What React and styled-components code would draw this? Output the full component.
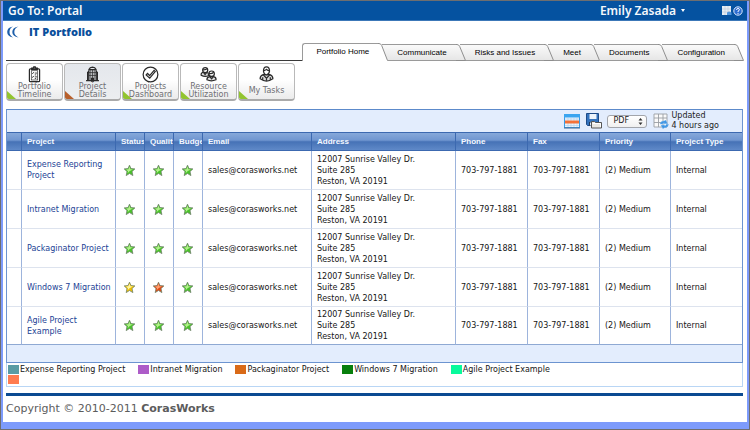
import React from 'react';
import styled, { createGlobalStyle } from 'styled-components';

const verdana = '"DejaVu Sans", Verdana, sans-serif';
const arial = '"Liberation Sans", Arial, sans-serif';

const GlobalStyle = createGlobalStyle`
  * { box-sizing: border-box; }
  body { margin: 0; background: #7d9bfb; font-family: ${verdana}; }
  button, select { font: inherit; margin: 0; }
`;

const Window = styled.div`
  min-height: 100vh;
  display: flex;
  flex-direction: column;
  padding: 0 2px 7px;
  border: 1px solid #6e6e70;
  background: #7d9bfb;
`;
const Page = styled.div`
  flex: 1;
  display: flex;
  flex-direction: column;
  background: #fff;
`;
const TopBar = styled.header`
  display: flex;
  align-items: center;
  height: 20px;
  padding: 0 4px 0 5px;
  background: #0552a0;
  border-bottom: 1px solid #3c78b8;
  color: #f4f8fc;
  font: 600 12px/16px "Noto Sans", sans-serif;
`;
const TopLabel = styled.span`
  flex: 1;
`;
const UserButton = styled.button`
  display: flex;
  align-items: center;
  gap: 5px;
  margin-right: 36px;
  padding: 0;
  border: 0;
  background: none;
  color: inherit;
`;
const IconLink = styled.button`
  display: flex;
  padding: 0;
  border: 0;
  background: none;
  margin-left: 1px;
`;
const TitleRow = styled.div`
  display: flex;
  align-items: center;
  gap: 10px;
  height: 22px;
  padding-left: 4px;
`;
const Title = styled.h1`
  margin: 0;
  color: #0a4f9c;
  font: 800 11px/16px "Open Sans", sans-serif;
`;
const TabBar = styled.nav`
  display: flex;
  align-items: flex-end;
  height: 18px;
  padding: 0 3px;
`;
const TabLine = styled.div`
  flex: 1;
  border-bottom: 1px solid #3a3a3a;
`;
const Tab = styled.button`
  position: relative;
  z-index: ${(p) => p.$z};
  display: flex;
  align-items: center;
  height: ${(p) => (p.$active ? 18 : 17)}px;
  margin: 0 0 0 ${(p) => (p.$active ? 0 : -6)}px;
  padding: 0;
  border: 0;
  background: none;
  color: #000;
  font: 8px/12px ${arial};
  white-space: nowrap;
`;
const TabBody = styled.span`
  align-self: stretch;
  padding: 2px 9px 0 ${(p) => (p.$active ? 13 : 15)}px;
  border: solid #9a9a9a;
  border-width: 1px 0 ${(p) => (p.$active ? 0 : 1)}px ${(p) => (p.$active ? 1 : 0)}px;
  border-radius: ${(p) => (p.$active ? '3px 0 0 0' : '0')};
  background: ${(p) => (p.$active ? '#fff' : 'linear-gradient(#fafafa, #e6e6e6)')};
`;
const Actions = styled.div`
  display: flex;
  gap: 1px;
  padding: 2px 3px 0;
`;
const ActionButton = styled.button`
  position: relative;
  display: flex;
  flex-direction: column;
  align-items: center;
  width: 57px;
  height: 38px;
  padding: 2px 0 0;
  overflow: hidden;
  border: 1px solid #b9b9b9;
  border-bottom: 2px solid #aaa;
  border-radius: 4px;
  background: ${(p) => (p.$current ? 'linear-gradient(#e4e7ec, #eceef0)' : 'linear-gradient(#fff 45%, #ebebeb)')};
  color: #6f6f74;
  font-size: 8px;
  line-height: 8px;

  &::after {
    content: '';
    position: absolute;
    left: 0;
    bottom: 0;
    width: 9px;
    height: 8px;
    background: ${(p) => (p.$current ? '#b8602c' : '#92c42e')};
    clip-path: polygon(0 0, 100% 100%, 0 100%);
  }
`;
const ActionText = styled.span`
  flex: 1;
  display: flex;
  flex-direction: column;
  justify-content: center;
  position: relative;
  z-index: 1;
`;
const Grid = styled.section`
  margin: 8px 4px 0 3px;
  border: 1px solid #6c94d0;
  border-top-color: #5c8acb;
`;
const GridToolbar = styled.div`
  display: flex;
  align-items: center;
  justify-content: flex-end;
  height: 22px;
  padding-right: 23px;
  background: #e3edfd;
`;
const ToolButton = styled.button`
  display: flex;
  padding: 0;
  border: 0;
  background: none;
  margin-right: ${(p) => p.$gap}px;
`;
const SelectBox = styled.label`
  position: relative;
  display: flex;
  margin-right: 6px;

  svg {
    position: absolute;
    right: 4px;
    top: 3px;
    pointer-events: none;
  }
`;
const Select = styled.select`
  appearance: none;
  width: 40px;
  height: 13px;
  padding: 0 5px;
  border: 1px solid #a2a5ab;
  border-radius: 3px;
  background: linear-gradient(#fff, #f0f0f0);
  color: #222;
  font: 8px/10px ${verdana};
`;
const Updated = styled.div`
  color: #222;
  font-size: 8px;
  line-height: 10px;
`;
const Table = styled.table`
  width: 100%;
  table-layout: fixed;
  border-collapse: separate;
  border-spacing: 0;
  font-size: 8px;
  line-height: 11px;
`;
const Col = styled.col`
  width: ${(p) => (p.$w ? `${p.$w}px` : 'auto')};
`;
const Th = styled.th`
  height: 19px;
  padding: 0 0 0 5px;
  overflow: hidden;
  border: solid #3c69b0;
  border-width: 1px 0 1px ${(p) => (p.$first ? 0 : 1)}px;
  background: linear-gradient(#86a8da 0%, #7096d0 42%, #4672b6 52%, #5f89c8 100%);
  color: #f4f8ff;
  font: bold 8px/12px ${arial};
  text-align: left;
  white-space: nowrap;
`;
const Td = styled.td`
  height: 39px;
  padding: ${(p) => (p.$star ? '0' : '0 3px 0 5px')};
  border-left: ${(p) => (p.$first ? '0' : '1px solid #9db4dc')};
  border-bottom: 1px solid #dde3ee;
  background: #fff;
  color: #161616;
  text-align: ${(p) => (p.$star ? 'center' : 'left')};

  tr:last-child & {
    height: 38px;
    border-bottom-color: #8fa9d3;
  }
  svg { display: block; margin: 0 auto 0 7px; }
`;
const ProjectLink = styled.a`
  color: #1c3f95;
  text-decoration: none;
`;
const GridFooter = styled.div`
  height: 17px;
  background: #e3edfd;
`;
const Legend = styled.ul`
  display: flex;
  flex-wrap: wrap;
  align-content: flex-start;
  gap: 1px 13px;
  margin: 0 4px 0 3px;
  padding: 2px 24% 2px 1px;
  list-style: none;
  border: 1px solid #b9d6f5;
  border-top: 0;
  font-size: 8px;
  line-height: 9px;
  color: #161616;
`;
const LegendItem = styled.li`
  display: flex;
  align-items: center;
  gap: 1px;
`;
const Swatch = styled.span`
  width: 11px;
  height: 9px;
  background: ${(p) => p.$color};
`;
const Footer = styled.footer`
  margin: 6px 4px 0 3px;
  padding-top: 5px;
  border-top: 3px solid #0b4a92;
  color: #5c5c5c;
  font-size: 11px;
  line-height: 16px;
`;

const STAR = { green: ['#b4f08c', '#48c428'], yellow: ['#fff6a0', '#f0c000'], red: ['#ffa070', '#e04810'] };

function Star({ color }) {
  const [light, dark] = STAR[color];
  return (
    <svg width="13" height="13" viewBox="0 0 13 13" role="img" aria-label={color}>
      <path d="M6.5 1.2 8 4.6l3.9.3-2.9 2.7.9 4-3.4-2.1-3.3 2.1.8-4L1.2 4.9 5 4.6z" fill={dark} stroke="#6f806a" strokeWidth=".8" strokeLinejoin="round" />
      <path d="M6.4 2.6 7.4 5.3l2.6.2-3.2 1.6-2.2 2.2.4-2.1L3 5.5l2.4-.2z" fill={light} />
    </svg>
  );
}

function TabCap({ active }) {
  const h = active ? 18 : 17;
  const b = active ? h : h - 1;
  return (
    <svg width="10" height={h} viewBox={`0 0 10 ${h}`}>
      <defs>
        <linearGradient id="tabFill" x2="0" y2="1">
          <stop offset="0" stopColor="#fafafa" />
          <stop offset="1" stopColor="#e6e6e6" />
        </linearGradient>
      </defs>
      <path d={`M0 .5H1Q3 .6 3.7 2.5L9.5 ${h - 0.5}V${b}H0z`} fill={active ? '#fff' : 'url(#tabFill)'} />
      <path d={`M0 .5H1Q3 .6 3.7 2.5L9.5 ${h - 0.5}${active ? '' : 'H0'}`} fill="none" stroke="#8e8e8e" />
    </svg>
  );
}

const line = { width: 17, height: 17, viewBox: '0 0 18 18', fill: 'none', stroke: '#2a2a2a', strokeWidth: 1.3 };
const ActionIcons = {
  clipboard: (
    <svg {...line}>
      <rect x="3.6" y="3" width="10.8" height="13.6" rx="1" />
      <rect x="5.6" y="5" width="6.8" height="9.8" strokeWidth=".7" />
      <path d="M6 3.6V2.2h1.6L8.2.9h1.6l.6 1.3H12v1.4z" fill="#666" />
      <path d="m6.3 7.3.8.8 1.2-1.6M6.3 11.3l.8.8 1.2-1.6M9.3 7.5H12M9.3 9.4h1.5M9.3 11.5H12M9.3 13.2h1.5" strokeWidth=".9" />
    </svg>
  ),
  building: (
    <svg {...line}>
      <path d="M5.2 15V3.6Q6.2 1.2 9 1.1q2.8.1 3.8 2.5V15M5.2 5.5 3.8 7v8M12.8 5.5 14.2 7v8M2.2 15.5h13.6M5.2 3.9h7.6" />
      <path d="M7.2 4v11M9 4v11M10.8 4v11M5.2 7h7.6M5.2 10h7.6" strokeWidth=".8" />
      <path d="M8 13h2v3H8z" fill="#333" />
    </svg>
  ),
  check: (
    <svg {...line}>
      <circle cx="9" cy="9" r="7.8" />
      <path d="m4.4 9.4 1.4-1.5 2.3 2.2 4.7-5.4 1.2 1.2-5.8 7z" fill="#fff" />
    </svg>
  ),
  people: (
    <svg {...line}>
      <path d="M1.2 9.7Q.8 7 4 6.6h3Q9 7 9 9v1.3Q5 12 1.2 9.7z" fill="#ddd" />
      <circle cx="5.5" cy="4.3" r="2.7" fill="#fff" />
      <path d="M3 4q3 .4 4.7-1.2M3.8 7l1.6 2L7 7" />
      <path d="M7.4 14.6q-.4-2.8 3-3.4h4q2.9.5 2.5 3.4-5 2.3-9.5 0z" fill="#ddd" />
      <circle cx="12.3" cy="8.2" r="2.9" fill="#fff" />
      <path d="M9.5 8q3.2.4 5-1.4M10.6 11.5l1.7 2 1.7-2" />
    </svg>
  ),
  person: (
    <svg {...line}>
      <path d="M2.3 13.6q-.3-3.3 3.2-4.5h7q3.5 1.2 3.2 4.5Q9 18.5 2.3 13.6z" fill="#ddd" />
      <path d="M5.8 5.4Q5.8 1 9 1t3.2 4.4Q11.6 9.2 9 9.4 6.3 9.2 5.8 5.4z" fill="#fff" />
      <path d="M6 5q1.4.1 3-1.4Q10.4 5 12 5M5.4 9.2 9 13l3.6-3.8M9 12v3.6M5 12v2.8M13 12v2.8" />
    </svg>
  ),
};

const tabs = ['Portfolio Home', 'Communicate', 'Risks and Issues', 'Meet', 'Documents', 'Configuration'];
const actions = [
  ['clipboard', ['Portfolio', 'Timeline']],
  ['building', ['Project', 'Details']],
  ['check', ['Projects', 'Dashboard']],
  ['people', ['Resource', 'Utilization']],
  ['person', ['My Tasks']],
];
const columns = [
  ['', 14], ['Project', 94], ['Status', 29], ['Quality', 29], ['Budget', 29], ['Email', 109],
  ['Address', 0], ['Phone', 72], ['Fax', 72], ['Priority', 71], ['Project Type', 72],
];
const projects = [
  ['Expense Reporting Project', 'green', 'green', 'green'],
  ['Intranet Migration', 'green', 'green', 'green'],
  ['Packaginator Project', 'green', 'green', 'green'],
  ['Windows 7 Migration', 'yellow', 'red', 'green'],
  ['Agile Project Example', 'green', 'green', 'green'],
];
const legend = [
  ['Expense Reporting Project', '#5a9ca4'],
  ['Intranet Migration', '#ad5cc8'],
  ['Packaginator Project', '#d96a18'],
  ['Windows 7 Migration', '#087f0c'],
  ['Agile Project Example', '#08fa9c'],
  ['', '#ff7c50'],
];

export default function App() {
  return (
    <>
      <GlobalStyle />
      <Window>
        <Page>
          <TopBar>
            <TopLabel>Go To: Portal</TopLabel>
            <UserButton>
              Emily Zasada
              <svg width="4" height="3" viewBox="0 0 4 3"><path d="M0 0h4L2 3z" fill="#fff" /></svg>
            </UserButton>
            <IconLink aria-label="Customize">
              <svg width="10" height="10" viewBox="0 0 10 10">
                <path d="M0 0h9v9H0z" fill="#e8eef4" />
                <path d="M3 0v9M6 0v9M0 3h9M0 6h9" stroke="#b8c8d6" strokeWidth=".6" />
                <path d="M5 9V6.5l2-1 2.5 1V9z" fill="#4f94dc" />
              </svg>
            </IconLink>
            <IconLink aria-label="Help">
              <svg width="10" height="10" viewBox="0 0 10 10">
                <circle cx="5" cy="5" r="4.2" fill="#2c6cd0" stroke="#dce9fa" />
                <path d="M3.5 3.9Q3.6 2.5 5 2.5t1.5 1.2Q6.5 4.5 5 5.2V6M5 6.9v1" fill="none" stroke="#fff" strokeWidth="1" />
              </svg>
            </IconLink>
          </TopBar>
          <TitleRow>
            <svg width="12" height="12" viewBox="0 0 12 12">
              <path d="M6 .6Q.2 1.6.2 6T6 11.4Q2.5 9.5 2.5 6T6 .6z" fill="#1c5eaa" />
              <path d="M11.5.6Q5.3 1.6 5.3 6t6.2 5.4Q7.3 9.5 7.3 6t4.2-5.4z" fill="#1c5eaa" />
            </svg>
            <Title>IT Portfolio</Title>
          </TitleRow>
          <TabBar>
            <TabLine />
            {tabs.map((name, i) => (
              <Tab key={name} $active={i === 0} $z={10 - i}>
                <TabBody $active={i === 0}>{name}</TabBody>
                <TabCap active={i === 0} />
              </Tab>
            ))}
          </TabBar>
          <Actions>
            {actions.map(([icon, words], i) => (
              <ActionButton key={icon} $current={i === 1}>
                {ActionIcons[icon]}
                <ActionText>
                  {words.map((w) => <span key={w}>{w}</span>)}
                </ActionText>
              </ActionButton>
            ))}
          </Actions>
          <Grid>
            <GridToolbar>
              <ToolButton $gap={6} aria-label="Calendar view">
                <svg width="16" height="16" viewBox="0 0 16 16">
                  <rect x=".5" y="1.5" width="15" height="13" fill="#eaf5ff" stroke="#3a9be6" />
                  <path d="M0 1h16v3.5H0z" fill="#3aa5f0" />
                  <path d="M1 6h14M1 12.5h14M4 5v9M7 5v9M10 5v9M13 5v9" stroke="#b8d2e8" strokeWidth=".7" />
                  <path d="M1 7.5h14v3H1z" fill="#f47238" />
                  <path d="M0 15h16" stroke="#46688f" />
                </svg>
              </ToolButton>
              <ToolButton $gap={5} aria-label="Save export">
                <svg width="16" height="16" viewBox="0 0 16 16">
                  <path d="M.5.5h12v12h-11l-1-1z" fill="#3473bd" stroke="#1d4b88" />
                  <path d="M3.5 1h7v5h-7z" fill="#edf4fb" />
                  <path d="M3 9h6v3.5H3z" fill="#233b5c" />
                  <path d="M4 9.5h1.5v3H4z" fill="#dce8f4" />
                  <path d="M5.5 8.5h3l1 1h6V15h-10z" fill="#e9e7e2" stroke="#555" />
                  <path d="M6.5 10.5h8V14" fill="none" stroke="#fff" />
                </svg>
              </ToolButton>
              <SelectBox>
                <Select aria-label="Export format" defaultValue="PDF">
                  <option>PDF</option>
                  <option>Excel</option>
                </Select>
                <svg width="5" height="7" viewBox="0 0 5 7"><path d="M2.5 0 4.5 2.5h-4zM2.5 7l2-2.5h-4z" fill="#333" /></svg>
              </SelectBox>
              <ToolButton $gap={2} aria-label="Refresh">
                <svg width="16" height="16" viewBox="0 0 16 16">
                  <path d="M1 1h13v13H1z" fill="#fafafa" />
                  <path d="M1 1h13v13H1zM1 5h13M1 9.5h13M5.5 1v13M10 1v13" fill="none" stroke="#9a9ea4" strokeWidth=".9" />
                  <path d="M7 11q1-3.5 4.5-3l1-1 2 3.5-4 .3 1-1q-1.5-.2-2 1.2zM15.5 11.5q-1 3.5-4.5 3.2l-1 1L8 12.3l4-.3-1 1q1.6.1 2.3-1.5z" fill="#3c94e4" stroke="#6fb2f0" strokeWidth=".5" />
                </svg>
              </ToolButton>
              <Updated>Updated<br />4 hours ago</Updated>
            </GridToolbar>
            <Table>
              <colgroup>{columns.map(([n, w]) => <Col key={n} $w={w} />)}</colgroup>
              <thead>
                <tr>{columns.map(([n], i) => <Th key={n} $first={i === 0}>{n}</Th>)}</tr>
              </thead>
              <tbody>
                {projects.map(([name, ...stars]) => (
                  <tr key={name}>
                    <Td $first />
                    <Td><ProjectLink href="#">{name}</ProjectLink></Td>
                    {stars.map((c, i) => <Td key={i} $star><Star color={c} /></Td>)}
                    <Td>sales@corasworks.net</Td>
                    <Td>12007 Sunrise Valley Dr.<br />Suite 285<br />Reston, VA 20191</Td>
                    <Td>703-797-1881</Td>
                    <Td>703-797-1881</Td>
                    <Td>(2) Medium</Td>
                    <Td>Internal</Td>
                  </tr>
                ))}
              </tbody>
            </Table>
            <GridFooter />
          </Grid>
          <Legend>
            {legend.map(([name, color]) => (
              <LegendItem key={color}><Swatch $color={color} />{name}</LegendItem>
            ))}
          </Legend>
          <Footer>Copyright © 2010-2011 <strong>CorasWorks</strong></Footer>
        </Page>
      </Window>
    </>
  );
}
